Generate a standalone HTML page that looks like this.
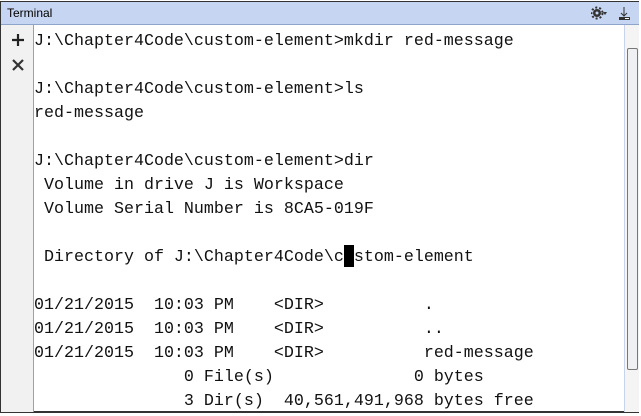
<!DOCTYPE html><html><head><style>
body{margin:0;width:641px;height:416px;overflow:hidden;background:#fff;position:relative;font-family:"Liberation Sans",sans-serif}
.frame{position:absolute;left:0;top:1px;width:639px;height:412px;border:1px solid #333;border-width:1px 1px 2px 1px;box-sizing:border-box}
.title{position:absolute;left:1px;top:2px;width:638px;height:22px;background:#c6d6f2;border-bottom:1px solid #8ea4c8;font-size:12px;line-height:22px}
.title span{position:absolute;left:6px;top:0}
.gut{position:absolute;left:1px;top:25px;width:32px;height:387px;background:#f1f1f1;border-right:1px solid #a0a0a0}
.sb{position:absolute;left:624px;top:25px;width:14px;height:387px;background:#f4f4f4;border-left:1px solid #c8d4ea}
.th{position:absolute;left:627px;top:48px;width:9px;height:320px;border:1px solid #777;border-radius:2px;background:#eef0f4}
pre{position:absolute;left:34px;top:30px;margin:0;font-family:"Liberation Mono",monospace;font-size:16.67px;line-height:24px;color:#111}
.cur{position:absolute;left:344px;top:245px;width:10px;height:22px;background:#000}
</style></head><body>
<div class="frame"></div>
<div class="title"><span>Terminal</span>
<svg style="position:absolute;left:590px;top:4px" width="16" height="14"><circle cx="6" cy="7" r="4" fill="#333"/><circle cx="6" cy="7" r="5.5" fill="none" stroke="#333" stroke-width="2" stroke-dasharray="2 2"/><circle cx="6" cy="7" r="1.5" fill="#c6d6f2"/><path d="M12 6h4l-2 3z" fill="#333"/></svg>
<svg style="position:absolute;left:617px;top:4px" width="14" height="15"><path d="M6 1v9M3 7l3 3 3-3" stroke="#333" fill="none"/><rect x="1" y="11" width="11" height="3" fill="#333"/><rect x="7" y="12" width="4" height="1" fill="#fff"/></svg>
</div>
<div class="gut">
<svg style="position:absolute;left:10px;top:8px" width="14" height="14"><path d="M7 1v12M1 7h12" stroke="#222" stroke-width="2.2"/></svg>
<svg style="position:absolute;left:10px;top:33px" width="14" height="14"><path d="M2 2l10 10M12 2L2 12" stroke="#333" stroke-width="2.2"/></svg>
</div>
<div class="sb"></div><div class="th"></div>
<pre>J:\Chapter4Code\custom-element&gt;mkdir red-message

J:\Chapter4Code\custom-element&gt;ls
red-message

J:\Chapter4Code\custom-element&gt;dir
 Volume in drive J is Workspace
 Volume Serial Number is 8CA5-019F

 Directory of J:\Chapter4Code\c stom-element

01/21/2015  10:03 PM    &lt;DIR&gt;          .
01/21/2015  10:03 PM    &lt;DIR&gt;          ..
01/21/2015  10:03 PM    &lt;DIR&gt;          red-message
               0 File(s)              0 bytes
               3 Dir(s)  40,561,491,968 bytes free</pre>
<div class="cur"></div>
</body></html>
